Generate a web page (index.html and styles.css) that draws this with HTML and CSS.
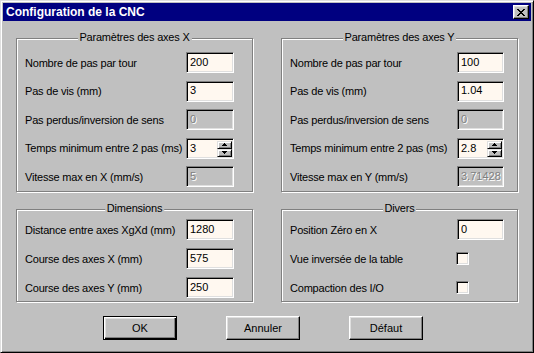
FILE: index.html
```html
<!DOCTYPE html>
<html lang="fr">
<head>
<meta charset="utf-8">
<title>Configuration de la CNC</title>
<link rel="stylesheet" href="styles.css">
</head>
<body>
<div class="window">
  <div class="titlebar">
    <span class="title">Configuration de la CNC</span>
    <button class="close" aria-label="Fermer"><svg width="8" height="7" viewBox="0 0 8 7"><path d="M0 0h2v1H0zM6 0h2v1H6zM1 1h2v1H1zM5 1h2v1H5zM2 2h4v1H2zM3 3h2v1H3zM2 4h4v1H2zM1 5h2v1H1zM5 5h2v1H5zM0 6h2v1H0zM6 6h2v1H6z" fill="#000"/></svg></button>
  </div>
  <div class="content">
    <div class="groups">
      <section class="group group-left group-top">
        <h2 class="legend">Paramètres des axes X</h2>
        <div class="row"><span class="label">Nombre de pas par tour</span><input class="field" value="200"></div>
        <div class="row"><span class="label">Pas de vis (mm)</span><input class="field" value="3"></div>
        <div class="row"><span class="label">Pas perdus/inversion de sens</span><input class="field disabled" value="0" disabled></div>
        <div class="row"><span class="label">Temps minimum entre 2 pas (ms)</span>
          <div class="spin"><input class="spin-input" value="3"><div class="spin-btns"><span class="spin-btn"><svg width="5" height="3" viewBox="0 0 5 3"><path d="M2 0h1v1h1v1h1v1H0V2h1V1h1z" fill="#000"/></svg></span><span class="spin-btn"><svg width="5" height="3" viewBox="0 0 5 3"><path d="M0 0h5v1H4v1H3v1H2V2H1V1H0z" fill="#000"/></svg></span></div></div>
        </div>
        <div class="row"><span class="label">Vitesse max en X (mm/s)</span><input class="field disabled" value="5" disabled></div>
      </section>
      <section class="group group-right group-top">
        <h2 class="legend">Paramètres des axes Y</h2>
        <div class="row"><span class="label">Nombre de pas par tour</span><input class="field" value="100"></div>
        <div class="row"><span class="label">Pas de vis (mm)</span><input class="field" value="1.04"></div>
        <div class="row"><span class="label">Pas perdus/inversion de sens</span><input class="field disabled" value="0" disabled></div>
        <div class="row"><span class="label">Temps minimum entre 2 pas (ms)</span>
          <div class="spin"><input class="spin-input" value="2.8"><div class="spin-btns"><span class="spin-btn"><svg width="5" height="3" viewBox="0 0 5 3"><path d="M2 0h1v1h1v1h1v1H0V2h1V1h1z" fill="#000"/></svg></span><span class="spin-btn"><svg width="5" height="3" viewBox="0 0 5 3"><path d="M0 0h5v1H4v1H3v1H2V2H1V1H0z" fill="#000"/></svg></span></div></div>
        </div>
        <div class="row"><span class="label">Vitesse max en Y (mm/s)</span><input class="field disabled" value="3.71428" disabled></div>
      </section>
      <section class="group group-left group-bottom">
        <h2 class="legend">Dimensions</h2>
        <div class="row"><span class="label">Distance entre axes XgXd (mm)</span><input class="field" value="1280"></div>
        <div class="row"><span class="label">Course des axes X (mm)</span><input class="field" value="575"></div>
        <div class="row"><span class="label">Course des axes Y (mm)</span><input class="field" value="250"></div>
      </section>
      <section class="group group-right group-bottom">
        <h2 class="legend">Divers</h2>
        <div class="row"><span class="label">Position Zéro en X</span><input class="field" value="0"></div>
        <div class="row"><span class="label">Vue inversée de la table</span><span class="check-cell"><input type="checkbox" class="check"></span></div>
        <div class="row"><span class="label">Compaction des I/O</span><span class="check-cell"><input type="checkbox" class="check"></span></div>
      </section>
    </div>
    <div class="buttons">
      <button class="btn btn-default">OK</button>
      <button class="btn">Annuler</button>
      <button class="btn">Défaut</button>
    </div>
  </div>
</div>
</body>
</html>
```

FILE: styles.css
```css
html, body {
  margin: 0;
  padding: 0;
  background: #c0c0c0;
}

body {
  font-family: "Liberation Sans", Arial, sans-serif;
  font-size: 11px;
  color: #000;
}

.window {
  width: 534px;
  height: 353px;
  box-sizing: border-box;
  border: 1px solid;
  border-color: #dfdfdf #000 #000 #dfdfdf;
  box-shadow: inset 1px 1px #fff, inset -1px -1px #808080;
  padding: 2px;
  background: #c0c0c0;
  display: flex;
  flex-direction: column;
}

.titlebar {
  height: 18px;
  flex: none;
  background: #000080;
  display: flex;
  align-items: center;
  justify-content: space-between;
  padding: 0 2px 0 3px;
}

.title {
  color: #fff;
  font-weight: bold;
  font-size: 12px;
}

.close {
  width: 16px;
  height: 14px;
  padding: 0;
  margin: 0;
  box-sizing: border-box;
  background: #c0c0c0;
  border: 1px solid;
  border-color: #fff #000 #000 #fff;
  box-shadow: inset -1px -1px #808080, inset 1px 1px #dfdfdf;
  display: flex;
  align-items: center;
  justify-content: center;
}

.close svg {
  display: block;
}

.content {
  padding: 17px 14px 0 13px;
  display: flex;
  flex-direction: column;
}

.groups {
  display: grid;
  grid-template-columns: 237px 237px;
  grid-template-rows: 154px 93px;
  column-gap: 28px;
  row-gap: 17px;
}

.group {
  position: relative;
  margin: 0;
  box-sizing: border-box;
  border: 1px solid #808080;
  box-shadow: inset 1px 1px #fff, 1px 1px #fff;
  display: flex;
  flex-direction: column;
}

.group-left {
  padding: 0 18px 0 8px;
}

.group-right {
  padding: 0 13px 0 8px;
}

.group-top {
  padding-top: 13px;
  gap: 7.5px;
}

.group-bottom {
  padding-top: 9px;
  gap: 8px;
}

.legend {
  position: absolute;
  top: -8px;
  left: 50%;
  transform: translateX(-50%);
  margin: 0;
  padding: 0 2px;
  background: #c0c0c0;
  font-size: 11px;
  font-weight: normal;
  line-height: 13px;
  letter-spacing: -0.2px;
  white-space: nowrap;
}

.row {
  display: flex;
  align-items: center;
  height: 21px;
}

.label {
  flex: 1;
  white-space: nowrap;
  letter-spacing: -0.2px;
}

.field {
  width: 48px;
  height: 21px;
  box-sizing: border-box;
  margin: 0;
  border: 1px solid;
  border-color: #808080 #fff #fff #808080;
  box-shadow: inset 1px 1px #000, inset -1px -1px #dfdfdf;
  background: #fff8f0;
  font-family: "Liberation Sans", Arial, sans-serif;
  font-size: 11px;
  color: #000;
  padding: 0 2px 2px 3px;
  outline: none;
}

.group-right .field {
  width: 47px;
}

.field.disabled {
  background: #c0c0c0;
  color: #808080;
  -webkit-text-fill-color: #808080;
  text-shadow: 1px 1px #fff;
  opacity: 1;
}

.spin {
  width: 48px;
  height: 21px;
  box-sizing: border-box;
  border: 1px solid;
  border-color: #808080 #fff #fff #808080;
  box-shadow: inset 1px 1px #000, inset -1px -1px #dfdfdf;
  background: #fff8f0;
  display: flex;
  padding: 2px 1px 1px 2px;
}

.group-right .spin {
  width: 47px;
}

.spin-input {
  flex: 1;
  min-width: 0;
  border: none;
  background: transparent;
  padding: 0 0 2px 1px;
  margin: 0;
  font-family: "Liberation Sans", Arial, sans-serif;
  font-size: 11px;
  color: #000;
  outline: none;
}

.spin-btns {
  width: 15px;
  display: flex;
  flex-direction: column;
}

.spin-btn {
  flex: 1;
  box-sizing: border-box;
  background: #c0c0c0;
  border: 1px solid;
  border-color: #dfdfdf #000 #000 #dfdfdf;
  box-shadow: inset 1px 1px #fff, inset -1px -1px #808080;
  display: flex;
  align-items: center;
  justify-content: center;
}

.spin-btn svg {
  display: block;
}

.check-cell {
  width: 48px;
  display: flex;
  align-items: center;
}

.check {
  appearance: none;
  -webkit-appearance: none;
  width: 13px;
  height: 13px;
  margin: 0;
  box-sizing: border-box;
  border: 1px solid;
  border-color: #808080 #fff #fff #808080;
  box-shadow: inset 1px 1px #000, inset -1px -1px #dfdfdf;
  background: #fff8f0;
}

.buttons {
  display: flex;
  gap: 49px;
  margin-top: 14px;
  padding-left: 87px;
}

.btn {
  width: 74px;
  height: 24px;
  box-sizing: border-box;
  margin: 0;
  padding: 0;
  background: #c0c0c0;
  border: 1px solid;
  border-color: #fff #000 #000 #fff;
  box-shadow: inset -1px -1px #808080, inset 1px 1px #dfdfdf;
  font-family: "Liberation Sans", Arial, sans-serif;
  font-size: 11px;
  color: #000;
}

.btn-default {
  border-color: #000;
  box-shadow: inset 1px 1px #fff, inset -1px -1px #000, inset -2px -2px #808080, inset 2px 2px #dfdfdf;
}
```
